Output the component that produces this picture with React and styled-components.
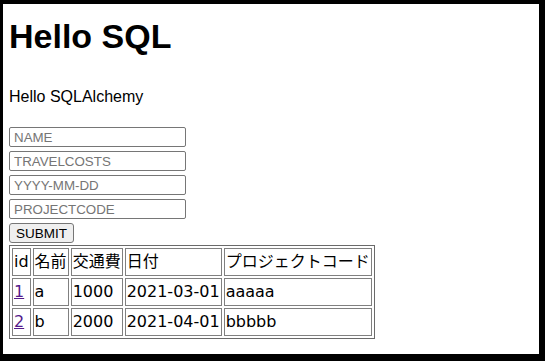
import React from "react";
import styled, { createGlobalStyle } from "styled-components";

const GlobalStyle = createGlobalStyle`
  html, body {
    margin: 0;
    background: #000;
  }
`;

const rows = [
  { id: 1, name: "a", cost: 1000, date: "2021-03-01", code: "aaaaa" },
  { id: 2, name: "b", cost: 2000, date: "2021-04-01", code: "bbbbb" },
];

export default function App() {
  return (
    <>
      <GlobalStyle />
      <Page>
        <Title>Hello SQL</Title>
        <Lead>Hello SQLAlchemy</Lead>

        <Form onSubmit={(e) => e.preventDefault()}>
          <Field type="text" placeholder="NAME" />
          <Field type="text" placeholder="TRAVELCOSTS" />
          <Field type="text" placeholder="YYYY-MM-DD" />
          <Field type="text" placeholder="PROJECTCODE" />
          <Submit type="submit">SUBMIT</Submit>
        </Form>

        <Table>
          <thead>
            <tr>
              <Cell as="th">id</Cell>
              <Cell as="th">名前</Cell>
              <Cell as="th">交通費</Cell>
              <Cell as="th">日付</Cell>
              <Cell as="th">プロジェクトコード</Cell>
            </tr>
          </thead>
          <tbody>
            {rows.map((r) => (
              <tr key={r.id}>
                <Cell>
                  <IdLink href={`#${r.id}`}>{r.id}</IdLink>
                </Cell>
                <Cell>{r.name}</Cell>
                <Cell>{r.cost}</Cell>
                <Cell>{r.date}</Cell>
                <Cell>{r.code}</Cell>
              </tr>
            ))}
          </tbody>
        </Table>
      </Page>
    </>
  );
}

const Page = styled.div`
  margin: 4px 6px 0 3px;
  height: 350px;
  padding-left: 6px;
  box-sizing: border-box;
  background: #fff;
  overflow: hidden;
  font-family: "Liberation Sans", Arial, "Noto Sans CJK JP", sans-serif;
  color: #000;
`;

const Title = styled.h1`
  margin: 0;
  padding-top: 13px;
  font-size: 34px;
  font-weight: bold;
  line-height: 39px;
`;

const Lead = styled.p`
  margin: 32px 0 0;
  font-size: 16px;
  line-height: 18px;
`;

const Form = styled.form`
  display: flex;
  flex-direction: column;
  align-items: flex-start;
  gap: 4px;
  margin-top: 21px;
`;

const Field = styled.input`
  width: 177px;
  height: 20px;
  box-sizing: border-box;
  padding: 1px 4px;
  border: 1px solid #767676;
  border-radius: 2px;
  font-family: "Liberation Sans", Arial, sans-serif;
  font-size: 13.33px;
  color: #000;
  outline: none;

  &::placeholder {
    color: #757575;
  }
`;

const Submit = styled.button`
  height: 20px;
  box-sizing: border-box;
  padding: 1px 6px;
  border: 1px solid #767676;
  border-radius: 3px;
  background: #efefef;
  font-family: "Liberation Sans", Arial, sans-serif;
  font-size: 13.5px;
  color: #000;
`;

const Table = styled.table`
  margin-top: 2px;
  border: 1px solid #6a6a6a;
  border-spacing: 2px;
  font-family: "DejaVu Sans", "Noto Sans CJK JP", sans-serif;
  font-size: 16px;
`;

const Cell = styled.td`
  padding: 1px;
  border: 1px solid #808080;
  font-weight: normal;
  text-align: left;
  line-height: 24px;
  white-space: nowrap;
`;

const IdLink = styled.a`
  color: #551a8b;
  text-decoration: underline;
`;
